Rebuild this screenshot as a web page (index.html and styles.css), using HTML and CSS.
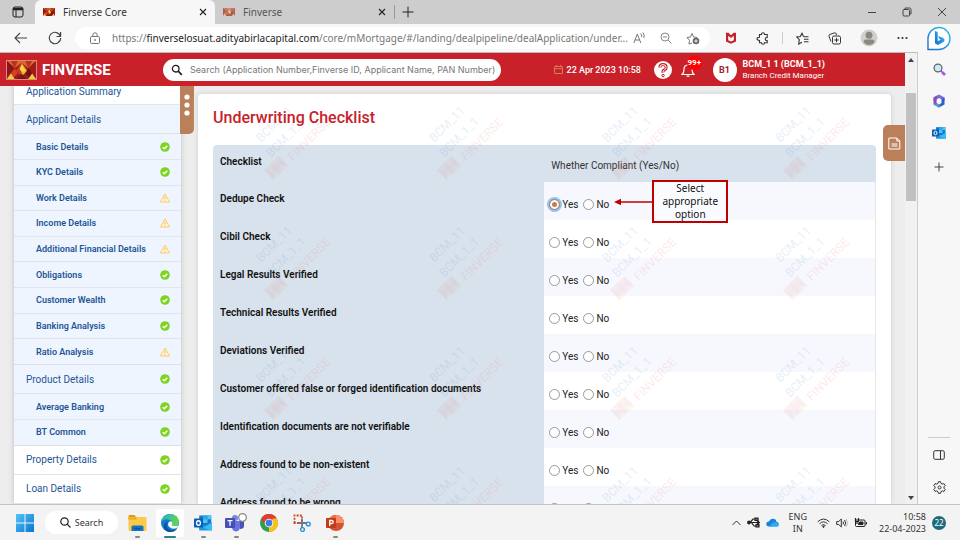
FILE: index.html
```html
<!DOCTYPE html>
<html lang="en">
<head>
<meta charset="utf-8">
<title>Finverse Core</title>
<link rel="stylesheet" href="styles.css">
</head>
<body>
<svg class="defs" aria-hidden="true">
  <defs>
    <symbol id="ok" viewBox="0 0 10 10"><circle cx="5" cy="5" r="4.8" fill="#7ed321"/><path d="M2.7 5.2l1.6 1.5 3-3" fill="none" stroke="#fff" stroke-width="1.4"/></symbol>
    <symbol id="warn" viewBox="0 0 10 10"><path d="M5 1L9.5 9H.5z" fill="#fff6df" stroke="#f9cb63" stroke-width="1" stroke-linejoin="round"/><path d="M5 3.8v2.6M5 7.2v1" stroke="#f9b93a" stroke-width="1"/></symbol>
    <symbol id="sun" viewBox="0 0 30 20" preserveAspectRatio="none">
      <rect width="30" height="20" fill="#9b1c1c"/>
      <path d="M0 0h30L22 8 15 2 8 8z" fill="#e0662a"/>
      <path d="M0 0l8 8-8 8z" fill="#8c1518"/><path d="M30 0l-8 8 8 8z" fill="#a01c1c"/>
      <path d="M4 0l4 8 3-8zM26 0l-4 8-3-8z" fill="#b8331f"/>
      <path d="M15 2l-6 9 6 6z" fill="#c9381f"/><path d="M15 2l6 9-6 6z" fill="#f0b32c"/>
      <path d="M15 4l-2 5 2 3 4-1z" fill="#f6d64a"/>
      <path d="M8 8l-6 9 3 3 6-6z" fill="#d4431f"/><path d="M22 8l6 9-3 3-6-6z" fill="#6f1013"/>
      <path d="M0 20l4-6 4 6z" fill="#f3c940"/><path d="M30 20l-4-6-4 6z" fill="#f3c940"/>
      <path d="M10 20l5-6 5 6z" fill="#7d1315"/>
    </symbol>
  </defs>
</svg>

<header class="tabs">
  <button class="plain tab-menu" aria-label="Tab actions"><svg width="12" height="12" viewBox="0 0 12 12" fill="none" stroke="#222"><rect x="1" y="1" width="10" height="10" rx="2"/><path d="M1 2.5h10M1 3.5h10" stroke-width="1.4"/><path d="M4 3v8"/></svg></button>
  <div class="tab active"><svg class="fav" width="12" height="8"><use href="#sun"/></svg><span>Finverse Core</span><button class="plain" aria-label="Close tab"><svg width="8" height="8" viewBox="0 0 8 8" stroke="#222" stroke-width="1.1"><path d="M1 1l6 6M7 1L1 7"/></svg></button></div>
  <div class="tab"><svg class="fav dim" width="12" height="8"><use href="#sun"/></svg><span>Finverse</span><button class="plain" aria-label="Close tab"><svg width="8" height="8" viewBox="0 0 8 8" stroke="#222" stroke-width="1.1"><path d="M1 1l6 6M7 1L1 7"/></svg></button></div>
  <span class="tab-sep"></span>
  <button class="plain new-tab" aria-label="New tab"><svg width="12" height="12" viewBox="0 0 12 12" stroke="#222"><path d="M6 .5v11M.5 6h11"/></svg></button>
  <div class="window-buttons">
    <button class="plain" aria-label="Minimize"><svg width="10" height="10" viewBox="0 0 10 10" stroke="#444"><path d="M1 5.5h8"/></svg></button>
    <button class="plain" aria-label="Restore"><svg width="10" height="10" viewBox="0 0 10 10" fill="none" stroke="#444"><rect x="1" y="2.5" width="6.5" height="6.5" rx="1"/><path d="M3 2V1h4.500q1.500 0 1.500 1.500V7H8"/></svg></button>
    <button class="plain" aria-label="Close window"><svg width="10" height="10" viewBox="0 0 10 10" stroke="#444"><path d="M1 1l8 8M9 1L1 9"/></svg></button>
  </div>
</header>

<div class="browser">
  <div class="column">
    <div class="toolbar">
      <button class="plain tool" aria-label="Back"><svg width="14" height="12" viewBox="0 0 14 12" fill="none" stroke="#444" stroke-width="1.100"><path d="M6 1L1 6l5 5M1 6h12"/></svg></button>
      <button class="plain tool" aria-label="Reload"><svg width="14" height="14" viewBox="0 0 14 14" fill="none" stroke="#444" stroke-width="1.200"><path d="M12.500 5.500A5.700 5.700 0 1 0 12.700 7M12.600 1v4.500H8.500"/></svg></button>
      <div class="address">
        <svg width="12" height="12" viewBox="0 0 12 12" fill="none" stroke="#777"><rect x="1.500" y="4.500" width="9" height="7" rx="1.200"/><path d="M3.800 4.500V3a2.200 2.200 0 0 1 4.400 0v1.500"/><circle cx="6" cy="8" r=".5" fill="#777"/></svg>
        <div class="url" role="textbox" aria-label="Address" tabindex="0">https://<b>finverselosuat.adityabirlacapital.com</b>/core/mMortgage/#/landing/dealpipeline/dealApplication/under...</div>
        <button class="plain" aria-label="Read aloud"><svg width="13" height="12" viewBox="0 0 13 12" fill="none" stroke="#777"><path d="M.8 11L4.300 2l3.500 9M2 8h4.600M7.600 1.500q1.500 1.500 1 3.500M9.800.5q2.200 2.500 1 5.500"/></svg></button>
        <button class="plain" aria-label="Zoom"><svg width="12" height="12" viewBox="0 0 12 12" fill="none" stroke="#888"><circle cx="5" cy="5" r="4"/><path d="M8 8l3.500 3.500M3 5h4"/></svg></button>
        <button class="plain" aria-label="Add to favourites"><svg width="14" height="13" viewBox="0 0 14 13" fill="none" stroke="#777"><path d="M6 11L3 12l.5-3.700L1 5.500 4.500 5 6 1.500 7.700 5l3.500.5"/><circle cx="10" cy="9" r="3.300" fill="#666" stroke="none"/><path d="M10 7.300v3.400M8.300 9h3.400" stroke="#fff" stroke-width=".9"/></svg></button>
      </div>
      <div class="tools">
        <button class="plain" aria-label="Security"><svg width="12" height="12" viewBox="0 0 12 12"><path d="M1 .8h2.400L6 3.200 8.600.8H11v8.700L6 11.700 1 9.500z" fill="#c8202b"/><path d="M3.200 3.800L6 6l2.800-2.200v4.500L6 9.500 3.200 8.300z" fill="#f7f7f7"/></svg></button>
        <button class="plain" aria-label="Extensions"><svg width="13" height="13" viewBox="0 0 13 13" fill="none" stroke="#333" stroke-width="1.100"><path d="M3.500 2.500h2q0-1.700 1.500-1.700t1.500 1.700h2.700v3Q9.300 5.200 9.300 7t1.900 1.500v2.200H8.500q0 1.500-1.500 1.500t-1.500-1.500h-2V8.500Q1 8.300 1 6.800t2.500-1.500z"/></svg></button>
        <span class="tool-sep"></span>
        <button class="plain" aria-label="Favourites"><svg width="13" height="13" viewBox="0 0 13 13" fill="none" stroke="#333" stroke-width="1.100"><path d="M7.500 4.500L6 1.300 4.300 4.500.800 5l2.500 2.700L2.700 12 6 10.200M7.500 4.700h5M8 7.200h4.500M8 9.700h4.500"/></svg></button>
        <button class="plain" aria-label="Collections"><svg width="13" height="13" viewBox="0 0 13 13" fill="none" stroke="#333"><path d="M3 9.500L1 4.200Q.500 3 1.800 2.500L6.500.800Q7.800.500 8.300 2v1"/><rect x="4.500" y="4" width="8" height="8" rx="1.500"/><path d="M8.500 5.800v4.400M6.300 8h4.400"/></svg></button>
        <button class="plain" aria-label="Profile"><svg width="18" height="18" viewBox="0 0 18 18"><circle cx="9" cy="9" r="8.500" fill="#d3d0cc"/><circle cx="9" cy="6.300" r="3.500" fill="#8b8783"/><path d="M3.500 13q0-2.500 2.500-2.500h6q2.500 0 2.500 2.500-2 3-5.500 3t-5.500-3z" fill="#8b8783"/></svg></button>
        <button class="plain" aria-label="Settings and more"><svg width="11" height="4" viewBox="0 0 11 4" fill="#333"><circle cx="1.500" cy="2" r="1.100"/><circle cx="5.500" cy="2" r="1.100"/><circle cx="9.500" cy="2" r="1.100"/></svg></button>
      </div>
    </div>

    <div class="viewport">
      <div class="page">
        <header class="app-bar">
          <svg class="brand-mark" width="31" height="20"><use href="#sun"/></svg>
          <span class="brand">FINVERSE</span>
          <label class="search"><svg width="12" height="12" viewBox="0 0 12 12" fill="none" stroke="#222"><circle cx="4.700" cy="4.700" r="3.300" stroke-width="1.300"/><path d="M7.200 7.200l3.600 3.600" stroke-width="1.700"/></svg><input type="text" aria-label="Search" placeholder="Search (Application Number,Finverse ID, Applicant Name, PAN Number)"></label>
          <div class="stamp"><svg width="9" height="9" viewBox="0 0 9 9" fill="none" stroke="#d08058"><rect x=".5" y="1.500" width="8" height="7" rx=".5"/><path d="M.5 3.700h8M2.500 0v2M6.500 0v2"/></svg><time>22 Apr 2023 10:58</time></div>
          <button class="plain" aria-label="Help"><svg width="18" height="18" viewBox="0 0 18 18"><circle cx="9" cy="9" r="9" fill="#fff"/><path d="M5.800 6.500Q6 3.600 9 3.600t3.200 2.800Q12.200 8 10.400 8.900T9 11.600" fill="none" stroke="#c92129" stroke-width="3"/><path d="M5.800 6.500Q6 3.600 9 3.600t3.200 2.800Q12.200 8 10.400 8.900T9 11.600" fill="none" stroke="#fff"/><circle cx="9" cy="14.500" r="1.200" fill="#fff" stroke="#c92129"/></svg></button>
          <button class="plain bell" aria-label="Notifications"><svg width="14" height="17" viewBox="0 0 14 17" fill="none" stroke="#fff" stroke-width="1.200"><path d="M1 13.500h12Q11 12 11 8.500 11 4 7 4T3 8.500Q3 12 1 13.500zM5.500 15.200h3M7 2.500V4"/></svg><span>99+</span></button>
          <div class="avatar">B1</div>
          <div class="who"><strong>BCM_1 1 (BCM_1_1)</strong><span>Branch Credit Manager</span></div>
        </header>

        <div class="body">
          <nav class="side" aria-label="Application sections">
            <a href="#" class="cut">Application Summary</a>
            <a href="#" class="main open">Applicant Details</a>
            <a href="#" class="sub">Basic Details<svg><use href="#ok"/></svg></a>
            <a href="#" class="sub">KYC Details<svg><use href="#ok"/></svg></a>
            <a href="#" class="sub">Work Details<svg><use href="#warn"/></svg></a>
            <a href="#" class="sub">Income Details<svg><use href="#warn"/></svg></a>
            <a href="#" class="sub">Additional Financial Details<svg><use href="#warn"/></svg></a>
            <a href="#" class="sub">Obligations<svg><use href="#ok"/></svg></a>
            <a href="#" class="sub">Customer Wealth<svg><use href="#ok"/></svg></a>
            <a href="#" class="sub">Banking Analysis<svg><use href="#ok"/></svg></a>
            <a href="#" class="sub last">Ratio Analysis<svg><use href="#warn"/></svg></a>
            <a href="#" class="main open">Product Details<svg><use href="#ok"/></svg></a>
            <a href="#" class="sub">Average Banking<svg><use href="#ok"/></svg></a>
            <a href="#" class="sub last">BT Common<svg><use href="#ok"/></svg></a>
            <a href="#" class="main">Property Details<svg><use href="#ok"/></svg></a>
            <a href="#" class="main">Loan Details<svg><use href="#ok"/></svg></a>
          </nav>
          <button class="plain grip" aria-label="Toggle menu"><svg width="6" height="22" viewBox="0 0 6 22" fill="#fff"><circle cx="3" cy="3" r="2.600"/><circle cx="3" cy="11" r="2.600"/><circle cx="3" cy="19" r="2.600"/></svg></button>

          <main class="card">
            <h1>Underwriting Checklist</h1>
            <table>
              <thead><tr><th scope="col">Checklist</th><th scope="col" class="answer">Whether Compliant (Yes/No)</th></tr></thead>
              <tbody>
                <tr><th scope="row">Dedupe Check</th><td><label><input type="radio" name="q1" checked>Yes</label><label><input type="radio" name="q1">No</label>
                  <div class="callout"><svg width="38" height="8" viewBox="0 0 38 8"><path d="M5 4h33" stroke="#c00000" stroke-width="1.500"/><path d="M0 4l7-3.300v6.600z" fill="#c00000"/></svg><p>Select appropriate option</p></div></td></tr>
                <tr><th scope="row">Cibil Check</th><td><label><input type="radio" name="q2">Yes</label><label><input type="radio" name="q2">No</label></td></tr>
                <tr><th scope="row">Legal Results Verified</th><td><label><input type="radio" name="q3">Yes</label><label><input type="radio" name="q3">No</label></td></tr>
                <tr><th scope="row">Technical Results Verified</th><td><label><input type="radio" name="q4">Yes</label><label><input type="radio" name="q4">No</label></td></tr>
                <tr><th scope="row">Deviations Verified</th><td><label><input type="radio" name="q5">Yes</label><label><input type="radio" name="q5">No</label></td></tr>
                <tr><th scope="row">Customer offered false or forged identification documents</th><td><label><input type="radio" name="q6">Yes</label><label><input type="radio" name="q6">No</label></td></tr>
                <tr><th scope="row">Identification documents are not verifiable</th><td><label><input type="radio" name="q7">Yes</label><label><input type="radio" name="q7">No</label></td></tr>
                <tr><th scope="row">Address found to be non-existent</th><td><label><input type="radio" name="q8">Yes</label><label><input type="radio" name="q8">No</label></td></tr>
                <tr><th scope="row">Address found to be wrong</th><td><label><input type="radio" name="q9">Yes</label><label><input type="radio" name="q9">No</label></td></tr>
              </tbody>
            </table>
            <svg class="watermark" width="100%" height="100%" aria-hidden="true">
              <defs>
                <pattern id="wm" x="41" y="0" width="173" height="120" patternUnits="userSpaceOnUse">
                  <g font-family="Roboto, sans-serif" font-size="12" text-anchor="middle">
                    <text transform="translate(38 33) rotate(-45)" fill="#5b8fc9">BCM_11</text>
                    <text transform="translate(50 46) rotate(-45)" fill="#5b8fc9">BCM_1_1</text>
                    <text transform="translate(73 48) rotate(-45)" fill="#f07070">FINVERSE</text>
                  </g>
                  <g transform="translate(37 74) rotate(-45)" opacity=".7">
                    <rect x="-10" y="-7" width="20" height="14" fill="#e58a80"/>
                    <path d="M-10-7L-4 0l-6 7zM10-7L4 0l6 7zM0-7l-4 7 4 7 4-7z" fill="#d0605a"/>
                    <path d="M-10 7l4-3 4 3zM10 7L6 4 2 7z" fill="#f0c060"/>
                  </g>
                </pattern>
              </defs>
              <rect width="100%" height="100%" fill="url(#wm)"/>
            </svg>
          </main>
          <button class="plain notes" aria-label="Notes"><svg width="13" height="13" viewBox="0 0 13 13" fill="none" stroke="#fff"><path d="M.800 1h8l3 3v8h-11zM8.800 1v3h3M3.500 7h6M3.500 9h6"/></svg></button>
        </div>
      </div>
      <div class="scroll" aria-hidden="true">
        <svg width="6" height="4" viewBox="0 0 6 4"><path d="M3 0l3 4H0z" fill="#444"/></svg>
        <div class="track"><div class="thumb"></div></div>
        <svg width="6" height="4" viewBox="0 0 6 4"><path d="M3 4l3-4H0z" fill="#444"/></svg>
      </div>
    </div>
  </div>

  <aside class="edge-bar" aria-label="Browser sidebar">
    <button class="plain bing" aria-label="Bing chat"><svg width="24" height="25" viewBox="0 0 24 25"><defs><linearGradient id="bg1" x1="0" y1="1" x2="1" y2="0"><stop offset="0" stop-color="#1668dc"/><stop offset="1" stop-color="#35c5e8"/></linearGradient></defs><path d="M1 23.500V12A11 11 0 1 1 12 23.500z" fill="#fff" stroke="url(#bg1)" stroke-width="1.400"/><path d="M8 5l2.700 1v9.300l3-1.700-1.500-.8-1-2.800 5 1.900q1.800 1 1.300 2.800-.5 1-1.500 1.500L10.700 19 8 17.300z" fill="url(#bg1)"/></svg></button>
    <button class="plain" aria-label="Search"><svg width="13" height="13" viewBox="0 0 13 13" fill="none"><circle cx="5" cy="5" r="3.900" fill="#cfe8f7" stroke="#666" stroke-width="1.300"/><path d="M8 8l1 1" stroke="#666" stroke-width="1.500"/><path d="M9 9l3 3" stroke="#b44ff0" stroke-width="2.600"/></svg></button>
    <button class="plain" aria-label="Microsoft 365"><svg width="14" height="14" viewBox="0 0 14 14"><path d="M7 .5l5.500 3v3.500L9.500 5.500 7 4 4.500 5.500 1.500 7V3.500z" fill="#7a6ad8"/><path d="M12.500 3.500v7L7 13.500l-2-1.500 4.500-3v-3.800z" fill="#2b62c4"/><path d="M1.500 3.500L5 1.500 4.500 8.500 8 12l-1 1.500-5.500-3z" fill="#8e4db5"/><path d="M4.500 9L8 11.500l-1 2-5.300-3z" fill="#3aa0dc"/><circle cx="7" cy="7" r="2.200" fill="#f7f7f7"/></svg></button>
    <button class="plain" aria-label="Outlook"><svg width="14" height="14" viewBox="0 0 24 24"><use href="#outlook"/></svg></button>
    <button class="plain add" aria-label="Add"><svg width="10" height="10" viewBox="0 0 10 10" stroke="#444"><path d="M5 .5v9M.5 5h9"/></svg></button>
    <span class="edge-line"></span>
    <button class="plain" aria-label="Hide sidebar"><svg width="12" height="10" viewBox="0 0 12 10" fill="none" stroke="#333"><rect x=".7" y=".7" width="10.600" height="8.600" rx="1.500"/><path d="M7.500 1v8"/></svg></button>
    <button class="plain gear" aria-label="Settings"><svg width="13" height="13" viewBox="0 0 13 13" fill="none" stroke="#333"><path d="M5.400.7h2.200l.4 1.700 1.300.7L11 2.600l1.200 1.900L11 5.800v1.400l1.200 1.300L11 10.400l-1.700-.5-1.300.7-.4 1.700H5.400L5 10.600l-1.300-.7-1.700.5L.800 8.500 2 7.200V5.800L.800 4.500 2 2.600l1.700.5L5 2.400z"/><circle cx="6.500" cy="6.500" r="1.500"/></svg></button>
  </aside>
</div>

<footer class="taskbar">
  <button class="plain app" aria-label="Start"><svg width="18" height="18" viewBox="0 0 18 18"><defs><linearGradient id="w" x1="0" y1="0" x2="1" y2="1"><stop offset="0" stop-color="#52c5f5"/><stop offset="1" stop-color="#0a74d4"/></linearGradient></defs><path d="M0 0h8.500v8.500H0zM9.500 0H18v8.500H9.500zM0 9.500h8.500V18H0zM9.500 9.500H18V18H9.500z" fill="url(#w)"/></svg></button>
  <button class="find"><svg width="11" height="11" viewBox="0 0 11 11" fill="none" stroke="#222" stroke-width="1.200"><circle cx="4.500" cy="4.500" r="3.700"/><path d="M7.200 7.200l3.300 3.300"/></svg>Search</button>
  <button class="plain app run" aria-label="File Explorer"><svg width="19" height="18" viewBox="0 0 19 18"><path d="M.5 2Q.5 1 1.500 1h5l1.500 2-7.500 2z" fill="#d99a17"/><rect x=".5" y="3" width="18" height="14" rx="1" fill="#fcca48"/><path d="M.5 3.500h6.500l1.500-1v3h-8z" fill="#e5a823"/><path d="M3.500 17v-4q0-1.500 1.500-1.500h9q1.500 0 1.500 1.500v4z" fill="#1273c9"/><path d="M6.500 14.500h6" stroke="#0b4f94" stroke-width="1.200"/></svg></button>
  <button class="plain app on" aria-label="Microsoft Edge"><svg width="18" height="18" viewBox="0 0 18 18"><defs><linearGradient id="e" x1="0" y1="0" x2="1" y2=".3"><stop offset="0" stop-color="#28a8e0"/><stop offset="1" stop-color="#62d64a"/></linearGradient></defs><circle cx="9" cy="9" r="9" fill="#1479cc"/><path d="M.2 8Q1 0 9 0q8.500.5 9 7.500 0 4-4 4.500-3.500 0-3.500-1.500Q12 9 10.500 7 7 4 2.500 6 1 7 .2 8z" fill="url(#e)"/><path d="M7 8q-3 3.500 0 7 4 3 9.200-.5Q14 18 9 18 3 17.500 3 12q.5-3.500 4-4z" fill="#0d4f94"/><path d="M7.500 8.500Q9.500 6.500 11 8q1 1.500-.3 2.700 0 1.500 3.800 1.300 2 0 3-1.500l-1 3q-4 2.500-7.500 0-3-2-1.500-5z" fill="#eef7fc"/></svg></button>
  <button class="plain app run" aria-label="Outlook"><svg width="18" height="18" viewBox="0 0 24 24"><g id="outlook"><rect x="7" y="2" width="16" height="14" fill="#1378cc"/><path d="M12 2h6v5h-6z" fill="#28a8ea"/><path d="M18 2h5v5h-5zM12 7h6v5h-6z" fill="#50c5f5"/><path d="M6 11l9 5 9-5v10q0 1-1 1H7z" fill="#1e9be6"/><path d="M24 11l-11 7 9 4h2z" fill="#37bdf5"/><rect x="0" y="6" width="12" height="12" rx="1" fill="#0a5fb4"/><ellipse cx="6" cy="12" rx="2.600" ry="3" fill="none" stroke="#fff" stroke-width="1.700"/></g></svg></button>
  <button class="plain app run" aria-label="Teams"><svg width="22" height="20" viewBox="0 0 22 20"><circle cx="10" cy="5" r="3" fill="#7b83eb"/><path d="M7 8h8v6q0 4-4 4.500Q7 18 7 14z" fill="#6a72dc"/><path d="M15 8h4v5q0 3-4 3z" fill="#4a52b8"/><rect x="0" y="5" width="10" height="10" rx="1" fill="#464eb8"/><path d="M2.500 7.700h5M5 7.700v5" stroke="#fff" stroke-width="1.300"/><circle cx="17.500" cy="4.500" r="3.800" fill="#fff" stroke="#888" stroke-width="1.300"/></svg></button>
  <button class="plain app" aria-label="Chrome"><svg width="18" height="18" viewBox="0 0 18 18"><circle cx="9" cy="9" r="9" fill="#2ba24c"/><path d="M1.200 4.500A9 9 0 0 1 16.800 4.500L9 9z" fill="#e33b2e"/><path d="M16.800 4.500A9 9 0 0 1 9 18l0-5 3.900-8.500z" fill="#fbc116"/><path d="M1.200 4.500L5.500 11.500 9 9V4.500z" fill="#e33b2e"/><circle cx="9" cy="9" r="4.300" fill="#fff"/><circle cx="9" cy="9" r="3.400" fill="#3b7ded"/></svg></button>
  <button class="plain app" aria-label="Snipping Tool"><svg width="18" height="18" viewBox="0 0 18 18" fill="none"><path d="M1.500 9V1.500H9V9z" stroke="#d4451c" stroke-width="1.800" stroke-dasharray="2 1.200"/><path d="M5 9h9M9 5v9" stroke="#777" stroke-width="1.800"/><circle cx="15.300" cy="10" r="1.900" stroke="#2593d8" stroke-width="1.400"/><circle cx="9.500" cy="15.500" r="1.900" stroke="#2593d8" stroke-width="1.400"/></svg></button>
  <button class="plain app run" aria-label="PowerPoint"><svg width="18" height="18" viewBox="0 0 18 18"><circle cx="10" cy="9" r="8" fill="#d35230"/><path d="M10 1a8 8 0 0 1 8 8h-8z" fill="#ff8f6b"/><path d="M10 1a8 8 0 0 0-8 8h8z" fill="#ed6c47"/><rect x="0" y="4" width="10" height="10" rx="1" fill="#c13b1b"/><path d="M3.700 12V6.500h2q1.500 0 1.500 1.500t-1.500 1.500h-2" fill="none" stroke="#fff" stroke-width="1.300"/></svg></button>
  <div class="tray">
    <svg width="9" height="6" viewBox="0 0 9 6" fill="none" stroke="#333"><path d="M.5 5L4.500 1l4 4"/></svg>
    <svg width="13" height="13" viewBox="0 0 13 13" fill="none" stroke="#222" stroke-width="1.200"><path d="M1 6.500h10M3 6.500l3-3.500h2M4.500 6.500L7 10h2"/><circle cx="2" cy="6.500" r="1.300" fill="#222"/><path d="M8 2h3v2.500H8zM9 8.500h3V11H9z" fill="#777"/><path d="M10.500 4.800l2 1.700-2 1.700z" fill="#222"/></svg>
    <svg width="13" height="9" viewBox="0 0 13 9"><path d="M3 8.500Q.3 8.300.3 6T3 3.500Q4 .500 7 .7t3.500 3Q12.800 4 12.800 6.300T10.500 8.500z" fill="#1683dc"/><path d="M3 8.500L7 4.500q3-1 5 1 1.500 3-1.500 3z" fill="#31aaf2"/></svg>
    <div class="lang"><span>ENG</span><span>IN</span></div>
    <svg width="13" height="10" viewBox="0 0 13 10" fill="none" stroke="#333"><path d="M.7 3.800q5.800-5.500 11.600 0M2.500 5.700q4-3.700 8 0M4.400 7.500q2.100-1.800 4.200 0"/><circle cx="6.500" cy="8.700" r=".7" fill="#333"/></svg>
    <svg width="12" height="10" viewBox="0 0 12 10" fill="none" stroke="#333"><path d="M.7 3.500h2L5.300 1v8L2.700 6.500h-2zM7 3.500q1 1.500 0 3M8.600 2q2 3 0 6"/><path d="M10.200 1q2.500 4 0 8" stroke="#bbb"/></svg>
    <svg width="13" height="11" viewBox="0 0 13 11" fill="none" stroke="#222"><rect x="1.500" y="3" width="9.500" height="6.500" rx="1"/><path d="M5.500 5h3.500v2.500H4.500V6.500z" fill="#222"/><path d="M12.300 5v2.500M1.500 1v3.500h3V1M3 4.500V7" stroke-width="1.200"/></svg>
    <div class="clock"><time>10:58</time><span>22-04-2023</span></div>
    <span class="count">22</span>
  </div>
</footer>
</body>
</html>
```

FILE: styles.css
```css
* { box-sizing: border-box; }

body {
  margin: 0;
  height: 100vh;
  display: flex;
  flex-direction: column;
  overflow: hidden;
  font-family: Roboto, sans-serif;
  font-size: 10px;
  color: #222;
  background: #f3f3f3;
}

.defs { position: absolute; width: 0; height: 0; }

svg { display: block; flex: none; }

.plain {
  display: flex;
  align-items: center;
  justify-content: center;
  padding: 0;
  border: 0;
  background: none;
}

/* Browser tabs */
.tabs {
  flex: 0 0 24px;
  display: flex;
  align-items: center;
  background: #cdcdcd;
  font-family: "Noto Sans", sans-serif;
}
.tab-menu { width: 35px; }
.tab {
  display: flex;
  align-items: center;
  align-self: stretch;
  gap: 8px;
  width: 179px;
  padding: 0 8px;
  color: #555;
}
.tab.active {
  width: 180px;
  border-radius: 6px 6px 0 0;
  background: #f7f7f7;
  color: #333;
}
.tab span { flex: 1; }
.dim { opacity: 0.6; }
.tab-sep { width: 1px; height: 14px; background: #999; }
.new-tab { width: 26px; }
.window-buttons { display: flex; gap: 25px; margin-left: auto; padding-right: 13px; }

/* Browser frame */
.browser { flex: 1; min-height: 0; display: flex; background: #f7f7f7; }
.column { flex: 1; min-width: 0; display: flex; flex-direction: column; }
.toolbar { flex: 0 0 28px; display: flex; align-items: center; padding-left: 4px; }
.tool { width: 34px; }
.address {
  flex: 1;
  min-width: 0;
  display: flex;
  align-items: center;
  gap: 14px;
  height: 22px;
  margin-left: 3px;
  padding: 0 10px 0 14px;
  border-radius: 11px;
  background: #fff;
}
.url {
  flex: 1;
  min-width: 0;
  margin-left: -3px;
  white-space: nowrap;
  font-family: "Noto Sans", sans-serif;
  color: #777;
}
.url b { font-weight: 400; color: #222; }
.tools { display: flex; align-items: center; gap: 19px; padding: 0 10px 0 15px; }
.tool-sep { width: 1px; height: 12px; margin: 0 -6px; background: #ccc; }

.viewport {
  flex: 1;
  min-height: 0;
  display: flex;
  border-top: 1px solid #bbb;
  border-right: 1px solid #ccc;
}
.page { flex: 1; min-width: 0; display: flex; flex-direction: column; }
.scroll {
  width: 12px;
  display: flex;
  flex-direction: column;
  align-items: center;
  gap: 4px;
  padding: 5px 0 4px;
  background: #f1f1f1;
}
.track { flex: 1; align-self: stretch; padding: 27px 1px 0; }
.thumb { height: 27%; background: #c1c1c1; }

.edge-bar {
  width: 42px;
  display: flex;
  flex-direction: column;
  align-items: center;
  gap: 18px;
  padding: 2px 0 10px;
}
.bing { margin-bottom: -6px; }
.add { margin-top: 4px; }
.gear { margin-top: 3px; }
.edge-line { width: 22px; height: 1px; margin-top: auto; margin-bottom: -6px; background: #ccc; }

/* Application header */
.app-bar {
  flex: 0 0 33px;
  display: flex;
  align-items: center;
  padding: 0 80px 0 6px;
  background: #c92129;
  color: #fff;
}
.brand-mark { border: 1px solid #d98a80; }
.brand { flex: 0 0 121px; margin-left: 5px; font-size: 15px; font-weight: 700; }
.search {
  flex: 1;
  display: flex;
  align-items: center;
  gap: 7px;
  height: 22px;
  padding-left: 8px;
  border-radius: 11px;
  background: #fff;
}
.search input {
  flex: 1;
  min-width: 0;
  padding: 0;
  border: 0;
  background: none;
  font: 9px Inter, sans-serif;
  color: #222;
}
.search input::placeholder { color: #777; }
.stamp {
  display: flex;
  align-items: center;
  gap: 4px;
  width: 100px;
  margin-left: 53px;
  font-size: 9px;
  font-weight: 500;
  white-space: nowrap;
}
.bell { position: relative; margin-left: 9px; }
.bell span {
  position: absolute;
  top: -5px;
  left: 6px;
  padding: 0 1px;
  border-radius: 7px;
  background: #f00;
  color: #fff;
  font: 700 8px/14px Roboto, sans-serif;
}
.avatar {
  width: 24px;
  margin: 0 6px 0 18px;
  border-radius: 12px;
  background: #fff;
  color: #a4202a;
  font-size: 9px;
  font-weight: 700;
  line-height: 24px;
  text-align: center;
}
.who { display: flex; flex-direction: column; line-height: 12px; white-space: nowrap; font-size: 8px; }
.who strong { font-size: 9px; font-weight: 700; }

/* Application body */
.body {
  position: relative;
  flex: 1;
  min-height: 0;
  display: flex;
  overflow: hidden;
  padding: 0 14px;
  background: #ededed;
}
.side {
  width: 167px;
  display: flex;
  flex-direction: column;
  background: #fff;
  box-shadow: 0 0 5px #bbb;
}
.side a {
  flex: 7 0 0;
  display: flex;
  align-items: center;
  justify-content: space-between;
  padding: 0 11px 0 22px;
  border-bottom: 1px solid #e2e6ec;
  color: #1f5596;
  font-size: 9px;
  font-weight: 600;
  text-decoration: none;
}
.side svg { width: 10px; height: 10px; }
.side .cut { flex: 0 0 19px; align-items: flex-start; line-height: 11px; }
.side .cut, .side .main { padding-left: 12px; font-size: 10px; font-weight: 400; }
.side .main { flex-grow: 8; border-bottom-color: #e4e4e4; }
.side .open, .side .sub { background: #eef5ff; }
.side .last { border-bottom-color: #dcdfe3; }

.grip, .notes { position: absolute; background: #bb8059; }
.grip { top: 0; left: 180px; width: 14px; height: 48px; padding-bottom: 10px; border-radius: 0 0 5px 0; }
.notes { top: 39px; right: 0; width: 22px; height: 36px; border-radius: 5px 0 0 5px; }

.card {
  position: relative;
  flex: 1;
  margin: 8px 0 0 17px;
  padding: 0 15px;
  border-radius: 4px 4px 0 0;
  background: #fff;
  box-shadow: 0 0 5px #ccc;
}
h1 { margin: 0; color: #c92129; font-size: 16px; font-weight: 500; line-height: 47px; padding-bottom: 4px; }
table { width: 100%; border-collapse: collapse; table-layout: fixed; border-radius: 4px 4px 0 0; background: #d8e2ec; }
th, td { padding: 0 7px; text-align: left; }
th { height: 38px; vertical-align: top; line-height: 34px; font-weight: 600; color: #111; }
thead th { height: 37px; }
th.answer { vertical-align: bottom; line-height: 32px; font-weight: 400; color: #333; }
td { position: relative; padding: 8px 0 0 5px; background: #fff; border-right: 1px solid #e6e6e6; }
tr:nth-child(odd) td { background: #f7f8fe; }
td label { display: inline-flex; align-items: center; gap: 2px; margin-right: 5px; }
input[type="radio"] {
  appearance: none;
  width: 11px;
  height: 11px;
  margin: 0;
  border: 1px solid #999;
  border-radius: 50%;
  background: #fff;
}
input[type="radio"]:checked {
  border-color: #bb8059;
  background: #bb8059;
  box-shadow: inset 0 0 0 2px #fff, 0 0 0 2px #8cc4f7;
}
.callout { position: absolute; z-index: 2; top: -2px; left: 70px; display: flex; align-items: center; }
.callout p {
  width: 76px;
  margin: 0;
  border: 2px solid #c00000;
  background: #fafbff;
  color: #111;
  font: 10px/13px "Noto Sans", sans-serif;
  text-align: center;
  padding: 0 4px;
}
.watermark { position: absolute; inset: 0; opacity: 0.14; pointer-events: none; }

/* Taskbar */
.taskbar {
  flex: 0 0 36px;
  display: flex;
  align-items: center;
  padding: 0 14px 0 9px;
  border-top: 1px solid #c4c4c4;
  background: #f3f3f3;
  font-family: "Noto Sans", sans-serif;
}
.app { position: relative; width: 28px; height: 28px; margin: 0 3px 0 2px; border-radius: 3px; }
.app.on { background: #fff; }
.app.run::after, .app.on::after {
  content: "";
  position: absolute;
  bottom: -1px;
  width: 5px;
  height: 2px;
  border-radius: 1px;
  background: #888;
}
.app.on::after { width: 12px; background: #2a8090; }
.find {
  display: flex;
  align-items: center;
  justify-content: center;
  gap: 4px;
  width: 73px;
  height: 23px;
  margin: 0 3px;
  border: 0;
  border-radius: 12px;
  background: #fff;
  color: #333;
  font: 9px "Noto Sans", sans-serif;
}
.tray { display: flex; align-items: center; gap: 6px; margin-left: auto; color: #333; font-size: 9px; line-height: 12px; }
.lang { display: flex; flex-direction: column; align-items: center; margin: 0 4px; }
.clock { display: flex; flex-direction: column; align-items: flex-end; margin-left: 6px; }
.count { width: 14px; border-radius: 7px; background: #1d6a7c; color: #fff; font-size: 8px; line-height: 14px; text-align: center; }
```
